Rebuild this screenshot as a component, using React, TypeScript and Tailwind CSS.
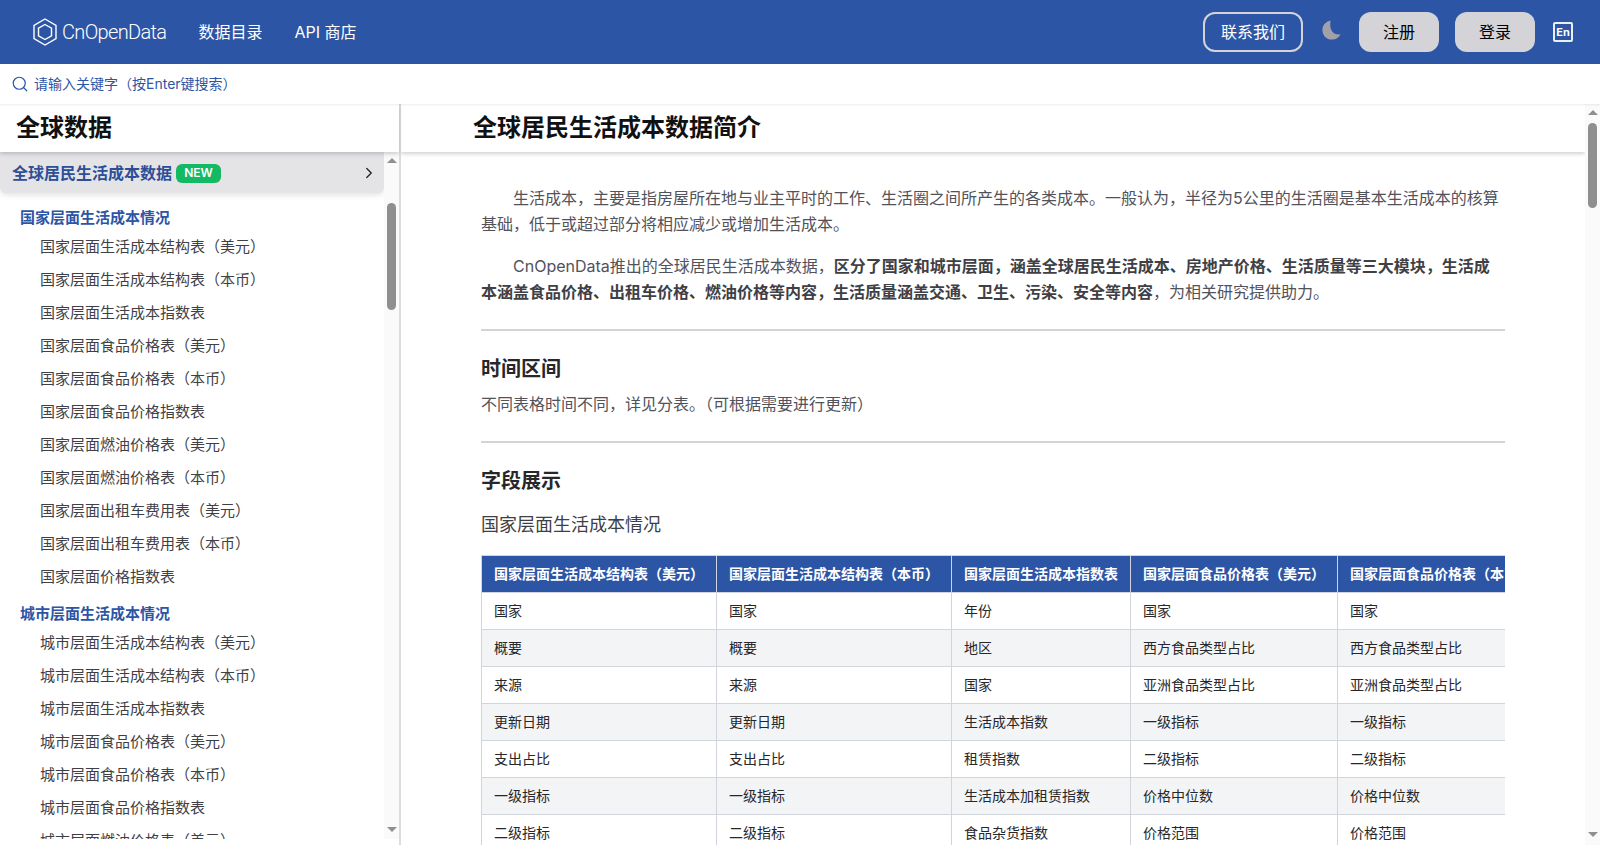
import { Search, ChevronRight } from "lucide-react";

const font = "font-['Inter','Noto_Sans_CJK_SC',sans-serif]";

const tables = [
  "生活成本结构表（美元）",
  "生活成本结构表（本币）",
  "生活成本指数表",
  "食品价格表（美元）",
  "食品价格表（本币）",
  "食品价格指数表",
  "燃油价格表（美元）",
  "燃油价格表（本币）",
  "出租车费用表（美元）",
  "出租车费用表（本币）",
  "价格指数表",
];

const cityTables = tables.slice(0, 7);

const columns = [
  { title: "国家层面生活成本结构表（美元）", width: "w-[235px]" },
  { title: "国家层面生活成本结构表（本币）", width: "w-[235px]" },
  { title: "国家层面生活成本指数表", width: "w-[179px]" },
  { title: "国家层面食品价格表（美元）", width: "w-[207px]" },
  { title: "国家层面食品价格表（本币）", width: "w-[207px]" },
];

const rows = [
  ["国家", "国家", "年份", "国家", "国家"],
  ["概要", "概要", "地区", "西方食品类型占比", "西方食品类型占比"],
  ["来源", "来源", "国家", "亚洲食品类型占比", "亚洲食品类型占比"],
  ["更新日期", "更新日期", "生活成本指数", "一级指标", "一级指标"],
  ["支出占比", "支出占比", "租赁指数", "二级指标", "二级指标"],
  ["一级指标", "一级指标", "生活成本加租赁指数", "价格中位数", "价格中位数"],
  ["二级指标", "二级指标", "食品杂货指数", "价格范围", "价格范围"],
];

const Logo = () => (
  <svg width="24" height="28" viewBox="0 0 24 28" fill="none" stroke="white" className="shrink-0">
    <path d="M12 1 L23 7.5 V20.5 L12 27 L1 20.5 V7.5 Z" strokeWidth="1.4" />
    <path d="M12 6.5 L18.5 10.2 V17.8 L12 21.5 L5.5 17.8 V10.2 Z" strokeWidth="1.4" />
  </svg>
);

const Moon = () => (
  <svg width="19" height="20" viewBox="0 0 19 20" className="fill-[#a1a1aa]">
    <path d="M8.6 0.4 C4.6 1.2 0.4 4.4 0.4 10 C0.4 15.6 4.6 19.6 9.8 19.6 C14 19.6 17.2 17 18.6 14.2 C12.6 15.6 6.6 11.2 8.6 0.4 Z" />
  </svg>
);

const EnIcon = () => (
  <div className="w-5 h-5 border-2 border-white/90 rounded-[2px] flex items-center justify-center text-white text-[11px] font-bold leading-none">
    En
  </div>
);

// thin scrollbar with arrows, same look on both panes
const ScrollRail = ({ gap, thumbHeight, bottom }: { gap: string; thumbHeight: string; bottom: string }) => (
  <div className="w-[15px] shrink-0 bg-[#fafafa] flex flex-col items-center">
    <div className={`w-0 h-0 border-x-[5px] border-x-transparent border-b-[5px] border-b-[#8f8f8f] mt-[6px] ${gap}`} />
    <div className={`w-[9px] rounded-full bg-[#8f8f8f] ${thumbHeight}`} />
    <div className="flex-1" />
    <div className={`w-0 h-0 border-x-[5px] border-x-transparent border-t-[5px] border-t-[#8f8f8f] ${bottom}`} />
  </div>
);

const Sidebar = () => (
  <aside className="w-[401px] shrink-0 border-r-2 border-[#dcdcdc] flex flex-col">
    <div className="h-[48px] shrink-0 flex items-center pl-4 text-2xl font-bold text-[#111] shadow-[0_2px_4px_rgba(0,0,0,0.18)] relative z-10">
      全球数据
    </div>
    <div className="h-[687px] flex overflow-hidden">
      <div className="flex-1 min-w-0 overflow-hidden">
        <div className="h-[41px] bg-[#e4e4e7] rounded-b-md shadow-[0_2px_6px_rgba(0,0,0,0.12)] flex items-center pl-3 pr-[6px]">
          <span className="text-base font-semibold text-[#2c4f97]">全球居民生活成本数据</span>
          <span className="ml-1 mt-[1px] h-[19px] w-[45px] rounded-md bg-[#13ba63] text-white text-xs font-semibold flex items-center justify-center">
            NEW
          </span>
          <ChevronRight size={18} strokeWidth={1.75} className="ml-auto text-[#222]" />
        </div>
        <div className="pt-[15px] pl-5">
          <h4 className="h-[20px] leading-[20px] text-[15px] font-semibold text-[#2d55a5]">国家层面生活成本情况</h4>
          <ul className="mt-[2px]">
            {tables.map((t) => (
              <li key={t} className="h-[33px] leading-[33px] pl-5 text-[15px] text-[#3f3f46]">
                国家层面{t}
              </li>
            ))}
          </ul>
          <h4 className="mt-[11px] h-[20px] leading-[20px] text-[15px] font-semibold text-[#2d55a5]">城市层面生活成本情况</h4>
          <ul className="mt-[2px]">
            {cityTables.map((t) => (
              <li key={t} className="h-[33px] leading-[33px] pl-5 text-[15px] text-[#3f3f46]">
                城市层面{t}
              </li>
            ))}
          </ul>
        </div>
      </div>
      <ScrollRail gap="mb-[40px]" thumbHeight="h-[107px]" bottom="mb-[7px]" />
    </div>
  </aside>
);

const DataTable = () => (
  <div className="mt-[16px] overflow-hidden">
    <table className="w-[1063px] table-fixed border-collapse text-sm text-[#27272a]">
      <thead>
        <tr className="h-[37px] bg-[#2d55a5] text-white font-bold text-left">
          {columns.map((c) => (
            <th key={c.title} className={`${c.width} px-3 border border-[#d1d5db] whitespace-nowrap overflow-hidden`}>
              {c.title}
            </th>
          ))}
        </tr>
      </thead>
      <tbody>
        {rows.map((row, i) => (
          <tr key={i} className={`h-[37px] ${i % 2 === 1 ? "bg-[#f3f4f6]" : "bg-white"}`}>
            {row.map((cell, j) => (
              <td key={j} className="px-3 border border-[#d1d5db]">
                {cell}
              </td>
            ))}
          </tr>
        ))}
      </tbody>
    </table>
  </div>
);

const Main = () => (
  <div className="flex-1 min-w-0 flex">
    <main className="flex-1 min-w-0 flex flex-col overflow-hidden">
      <div className="h-[48px] shrink-0 flex items-center pl-[72px] text-2xl font-bold text-[#111] shadow-[0_2px_4px_rgba(0,0,0,0.18)] relative z-10">
        全球居民生活成本数据简介
      </div>
      <div className="flex-1 min-h-0 overflow-hidden pl-[80px] pr-[80px] pt-[33px] text-base text-[#52525b]">
        <p className="leading-[26px] indent-8">
          生活成本，主要是指房屋所在地与业主平时的工作、生活圈之间所产生的各类成本。一般认为，半径为5公里的生活圈是基本生活成本的核算基础，低于或超过部分将相应减少或增加生活成本。
        </p>
        <p className="mt-[16px] leading-[26px] indent-8">
          CnOpenData推出的全球居民生活成本数据，
          <strong className="font-bold text-[#3f3f46]">
            区分了国家和城市层面，涵盖全球居民生活成本、房地产价格、生活质量等三大模块，生活成本涵盖食品价格、出租车价格、燃油价格等内容，生活质量涵盖交通、卫生、污染、安全等内容
          </strong>
          ，为相关研究提供助力。
        </p>
        <hr className="mt-[24px] border-0 h-[2px] bg-[#d4d4d8]" />
        <h3 className="mt-[24px] h-[28px] leading-[28px] text-xl font-bold text-[#27272a]">时间区间</h3>
        <p className="mt-[8px] leading-[26px]">不同表格时间不同，详见分表。（可根据需要进行更新）</p>
        <hr className="mt-[24px] border-0 h-[2px] bg-[#d4d4d8]" />
        <h3 className="mt-[24px] h-[28px] leading-[28px] text-xl font-bold text-[#27272a]">字段展示</h3>
        <p className="mt-[16px] h-[28px] leading-[28px] text-lg text-[#3f3f46]">国家层面生活成本情况</p>
        <DataTable />
      </div>
    </main>
    <ScrollRail gap="mb-[8px]" thumbHeight="h-[85px]" bottom="mb-[8px]" />
  </div>
);

export default function App() {
  return (
    <div className={`${font} w-full h-[845px] flex flex-col bg-white overflow-hidden`}>
      <header className="h-16 shrink-0 bg-[#2d55a5] flex items-center pl-[33px] pr-[27px] text-white">
        <div className="flex items-center gap-[5px]">
          <Logo />
          <span className="font-['Roboto',sans-serif] font-light text-[20px] tracking-[-0.65px]">CnOpenData</span>
        </div>
        <nav className="ml-8 flex items-center gap-8 text-base">
          <span>数据目录</span>
          <span>API 商店</span>
        </nav>
        <div className="ml-auto flex items-center">
          <button className="w-[100px] h-10 rounded-xl border-2 border-[#d4d4d8] text-base">联系我们</button>
          <span className="ml-[19px] mb-[5px]">
            <Moon />
          </span>
          <button className="ml-[18px] w-20 h-10 rounded-xl bg-[#d4d4d8] text-black text-base">注册</button>
          <button className="ml-4 w-20 h-10 rounded-xl bg-[#d4d4d8] text-black text-base">登录</button>
          <span className="ml-[18px]">
            <EnIcon />
          </span>
        </div>
      </header>
      <div className="h-10 shrink-0 flex items-center pl-[11px] gap-[5px] text-sm text-[#2d55a5] shadow-[0_1px_2px_rgba(0,0,0,0.08)] relative z-20 bg-white">
        <Search size={18} strokeWidth={1.6} />
        <span>请输入关键字（按Enter键搜索）</span>
      </div>
      <div className="flex-1 min-h-0 flex">
        <Sidebar />
        <Main />
      </div>
    </div>
  );
}
